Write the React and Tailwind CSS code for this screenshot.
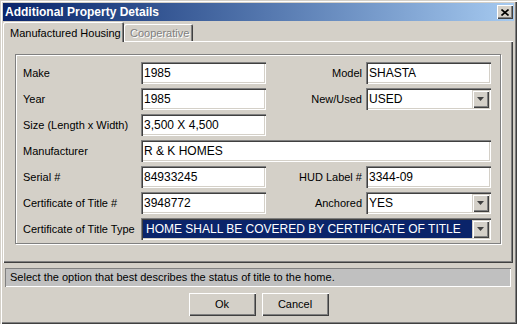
import React from "react";

const sunken =
  "shadow-[inset_1px_1px_0_#808080,inset_2px_2px_0_#404040,inset_-1px_-1px_0_#ffffff,inset_-2px_-2px_0_#d4d0c8]";
const raised =
  "shadow-[inset_1px_1px_0_#ffffff,inset_-1px_-1px_0_#404040,inset_-2px_-2px_0_#808080]";

function Input({ value, className = "" }) {
  return (
    <div
      className={`h-[22px] flex items-center bg-white pl-[3px] text-[12px] text-black whitespace-nowrap overflow-hidden ${sunken} ${className}`}
    >
      {value}
    </div>
  );
}

function Arrow() {
  return (
    <svg width="7" height="4" viewBox="0 0 7 4">
      <path d="M0 0H7L3.5 4Z" fill="#404040" />
    </svg>
  );
}

function Select({ value, selected }) {
  return (
    <div className={`h-[22px] flex items-stretch bg-white p-[2px] text-[12px] ${sunken}`}>
      <div
        className={
          selected
            ? "flex-1 flex items-center pl-[3px] bg-[#0a246a] text-white whitespace-nowrap overflow-hidden"
            : "flex-1 flex items-center pl-[1px] text-black whitespace-nowrap overflow-hidden"
        }
      >
        {value}
      </div>
      <div
        className={`w-[17px] bg-[#d4d0c8] flex items-center justify-center shadow-[inset_1px_1px_0_#d4d0c8,inset_2px_2px_0_#ffffff,inset_-1px_-1px_0_#404040,inset_-2px_-2px_0_#808080]`}
      >
        <Arrow />
      </div>
    </div>
  );
}

function Label({ children, right }) {
  return (
    <div
      className={
        right
          ? "h-[22px] flex items-center justify-end pr-[4px] text-[11px] text-black whitespace-nowrap"
          : "h-[22px] flex items-center text-[11px] text-black whitespace-nowrap"
      }
    >
      {children}
    </div>
  );
}

export default function App() {
  return (
    <div
      className={`w-[517px] h-[324px] overflow-hidden bg-[#d4d0c8] p-[3px] flex flex-col font-['Liberation_Sans',Arial,sans-serif] shadow-[inset_1px_1px_0_#d4d0c8,inset_2px_2px_0_#ffffff,inset_-1px_-1px_0_#404040,inset_-2px_-2px_0_#808080]`}
    >
      {/* Title bar */}
      <div className="h-[18px] shrink-0 flex items-center justify-between pl-[2px] pr-[1px] bg-linear-to-r from-[#0a246a] to-[#a6caf0]">
        <span className="text-white font-bold text-[12px] leading-none">
          Additional Property Details
        </span>
        <div className={`w-[16px] h-[14px] bg-[#d4d0c8] flex items-center justify-center ${raised}`}>
          <svg width="8" height="7" viewBox="0 0 8 7">
            <path d="M0.5 0.5L7.5 6.5M7.5 0.5L0.5 6.5" stroke="#000" strokeWidth="1.6" />
          </svg>
        </div>
      </div>

      {/* Tabs */}
      <div className="h-[20px] shrink-0 flex items-end relative z-10">
        <div className="h-[20px] w-[121px] -mb-[1px] pl-[7px] pt-[2px] text-[11px] text-black bg-[#d4d0c8] rounded-t-[2px] shadow-[inset_1px_1px_0_#ffffff,inset_-1px_0_0_#404040,inset_-2px_0_0_#808080] flex items-start">
          <span className="mt-[1px]">Manufactured Housing</span>
        </div>
        <div className="h-[17px] w-[69px] pl-[6px] text-[11px] text-[#808080] [text-shadow:1px_1px_0_#ffffff] rounded-t-[2px] shadow-[inset_1px_1px_0_#ffffff,inset_-1px_0_0_#404040,inset_-2px_0_0_#808080] flex items-start">
          <span className="mt-[1px]">Cooperative</span>
        </div>
      </div>

      {/* Tab panel */}
      <div className="h-[222px] shrink-0 mr-[1px] pt-[13px] px-[12px] shadow-[inset_1px_1px_0_#ffffff,inset_-1px_-1px_0_#404040,inset_-2px_-2px_0_#808080]">
        <div className="h-[190px] border border-[#808080] shadow-[inset_1px_1px_0_#ffffff,1px_1px_0_#ffffff] pt-[7px] pl-[7px]">
          <div className="grid grid-cols-[118px_125px_100px_125px] gap-y-[4px]">
            <Label>Make</Label>
            <Input value="1985" />
            <Label right>Model</Label>
            <Input value="SHASTA" />

            <Label>Year</Label>
            <Input value="1985" />
            <Label right>New/Used</Label>
            <Select value="USED" />

            <Label>Size (Length x Width)</Label>
            <Input value="3,500 X 4,500" />
            <div />
            <div />

            <Label>Manufacturer</Label>
            <Input value="R & K HOMES" className="col-span-3" />

            <Label>Serial #</Label>
            <Input value="84933245" />
            <Label right>HUD Label #</Label>
            <Input value="3344-09" />

            <Label>Certificate of Title #</Label>
            <Input value="3948772" />
            <Label right>Anchored</Label>
            <Select value="YES" />

            <Label>Certificate of Title Type</Label>
            <div className="col-span-3">
              <Select value="HOME SHALL BE COVERED BY CERTIFICATE OF TITLE" selected />
            </div>
          </div>
        </div>
      </div>

      {/* Status bar */}
      <div className="h-[19px] shrink-0 mt-[5px] ml-[2px] mr-[3px] bg-[#c0c0c0] flex items-center pl-[5px] text-[11px] text-black whitespace-nowrap shadow-[inset_1px_1px_0_#808080,inset_-1px_-1px_0_#ffffff]">
        Select the option that best describes the status of title to the home.
      </div>

      {/* Buttons */}
      <div className="mt-[6px] flex justify-center gap-[6px]">
        <div className={`w-[67px] h-[23px] flex items-center justify-center text-[11px] text-black ${raised}`}>
          Ok
        </div>
        <div className={`w-[67px] h-[23px] flex items-center justify-center text-[11px] text-black ${raised}`}>
          Cancel
        </div>
      </div>
    </div>
  );
}
